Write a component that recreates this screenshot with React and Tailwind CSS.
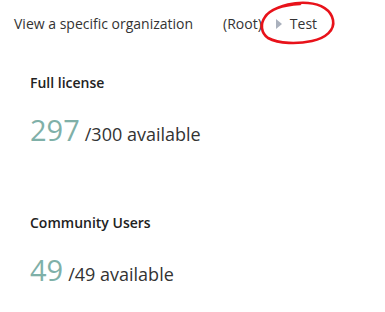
export default function App() {
  return (
    <div className="relative w-[385px] h-[312px] bg-white text-[#333333]" style={{ fontFamily: '"Open Sans", sans-serif' }}>
      <div className="flex items-center h-[46px] pl-[14px] text-[14px] pt-[1px]">
        <span>View a specific organization</span>
        <span className="ml-[30px]">(Root)</span>
        <span className="ml-[14px] mr-[8px] w-0 h-0 border-y-[5px] border-y-transparent border-l-[6px] border-l-[#aab1bd]"></span>
        <span>Test</span>
      </div>
      <svg className="absolute left-0 top-0" width="385" height="60" viewBox="0 0 385 60" fill="none">
        <path
          d="M270 12 C 280 5, 295 2, 308 3 C 321 4, 331 10, 333 20 C 335 30, 326 38, 312 41 C 298 44, 279 44, 268 38 C 261 33, 260 24, 265 17 C 270 9, 285 5, 300 4"
          stroke="#e8121a"
          strokeWidth="2.6"
          strokeLinecap="round"
        />
      </svg>
      <div className="pl-[30px] pt-[27px]">
        <div className="text-[14px] font-semibold leading-[19px] text-[#222]">Full license</div>
        <div className="flex items-baseline mt-[19px] leading-[37px]">
          <span className="text-[29px] text-[#7fb0a8]">297</span>
          <span className="text-[18px] ml-[5px]">/300 available</span>
        </div>
        <div className="text-[14px] font-semibold leading-[19px] text-[#222] mt-[60px]">Community Users</div>
        <div className="flex items-baseline mt-[19px] leading-[37px]">
          <span className="text-[29px] text-[#7fb0a8]">49</span>
          <span className="text-[18px] ml-[5px]">/49 available</span>
        </div>
      </div>
    </div>
  );
}
